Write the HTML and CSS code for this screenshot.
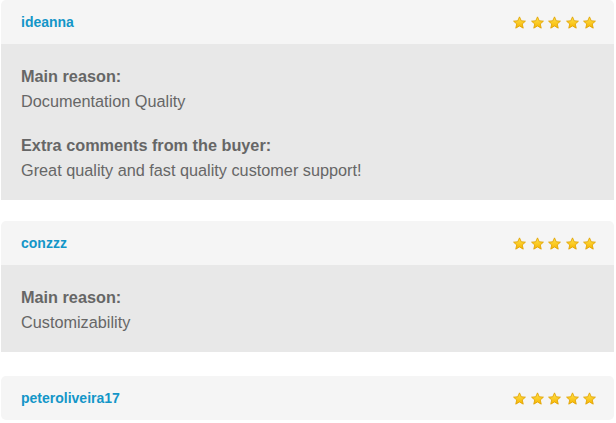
FILE: index.html
```html
<!DOCTYPE html>
<html lang="en">
<head>
    <meta charset="UTF-8">
    <meta name="viewport" content="width=device-width, initial-scale=1.0">
    <title>Buyer Reviews</title>
    <link rel="stylesheet" href="styles.css">
</head>
<body>
    <svg width="0" height="0" class="defs">
        <defs>
            <linearGradient id="gold" x1="0" y1="0" x2="0" y2="1">
                <stop offset="0" stop-color="#ffe34d"/>
                <stop offset="1" stop-color="#f7b500"/>
            </linearGradient>
            <symbol id="star" viewBox="0.2 0.2 13.6 13">
                <path d="M7 0.8 L8.8 4.9 L13.2 5.3 L9.9 8.2 L10.9 12.6 L7 10.3 L3.1 12.6 L4.1 8.2 L0.8 5.3 L5.2 4.9 Z" fill="url(#gold)" stroke="#e1a200" stroke-width="0.9" stroke-linejoin="round"/>
            </symbol>
        </defs>
    </svg>

    <div class="review">
        <div class="review-head">
            <a class="user" href="#">ideanna</a>
            <div class="stars">
                <svg><use href="#star"/></svg><svg><use href="#star"/></svg><svg><use href="#star"/></svg><svg><use href="#star"/></svg><svg><use href="#star"/></svg>
            </div>
        </div>
        <div class="review-body">
            <p><strong>Main reason:</strong><br>Documentation Quality</p>
            <p><strong>Extra comments from the buyer:</strong><br>Great quality and fast quality customer support!</p>
        </div>
    </div>

    <div class="review">
        <div class="review-head">
            <a class="user" href="#">conzzz</a>
            <div class="stars">
                <svg><use href="#star"/></svg><svg><use href="#star"/></svg><svg><use href="#star"/></svg><svg><use href="#star"/></svg><svg><use href="#star"/></svg>
            </div>
        </div>
        <div class="review-body">
            <p><strong>Main reason:</strong><br>Customizability</p>
        </div>
    </div>

    <div class="review last">
        <div class="review-head only">
            <a class="user" href="#">peteroliveira17</a>
            <div class="stars">
                <svg><use href="#star"/></svg><svg><use href="#star"/></svg><svg><use href="#star"/></svg><svg><use href="#star"/></svg><svg><use href="#star"/></svg>
            </div>
        </div>
    </div>
</body>
</html>
```

FILE: styles.css
```css
body {
    margin: 0;
    font-family: "Liberation Sans", Arial, sans-serif;
    color: #666;
    background: #fff;
}
.defs {
    position: absolute;
}
.review {
    margin: 0 2px 21px 1px;
}
.review.last {
    margin-top: 24px;
}
.review-head {
    height: 44px;
    display: flex;
    align-items: center;
    justify-content: space-between;
    padding: 0 18px 0 20px;
    background: #f5f5f5;
    border-radius: 5px 5px 0 0;
}
.review-head.only {
    border-radius: 5px;
}
.user {
    color: #1396c8;
    font-weight: bold;
    font-size: 14px;
    text-decoration: none;
}
.stars {
    display: flex;
    gap: 4.5px;
    margin-top: 1px;
}
.stars svg {
    width: 13px;
    height: 13px;
}
.review-body {
    background: #e8e8e8;
    padding: 20px 20px 18px;
    font-size: 16.25px;
    line-height: 24.5px;
}
.review-body p {
    margin: 0 0 20px;
}
.review-body p:last-child {
    margin-bottom: 0;
}
```
